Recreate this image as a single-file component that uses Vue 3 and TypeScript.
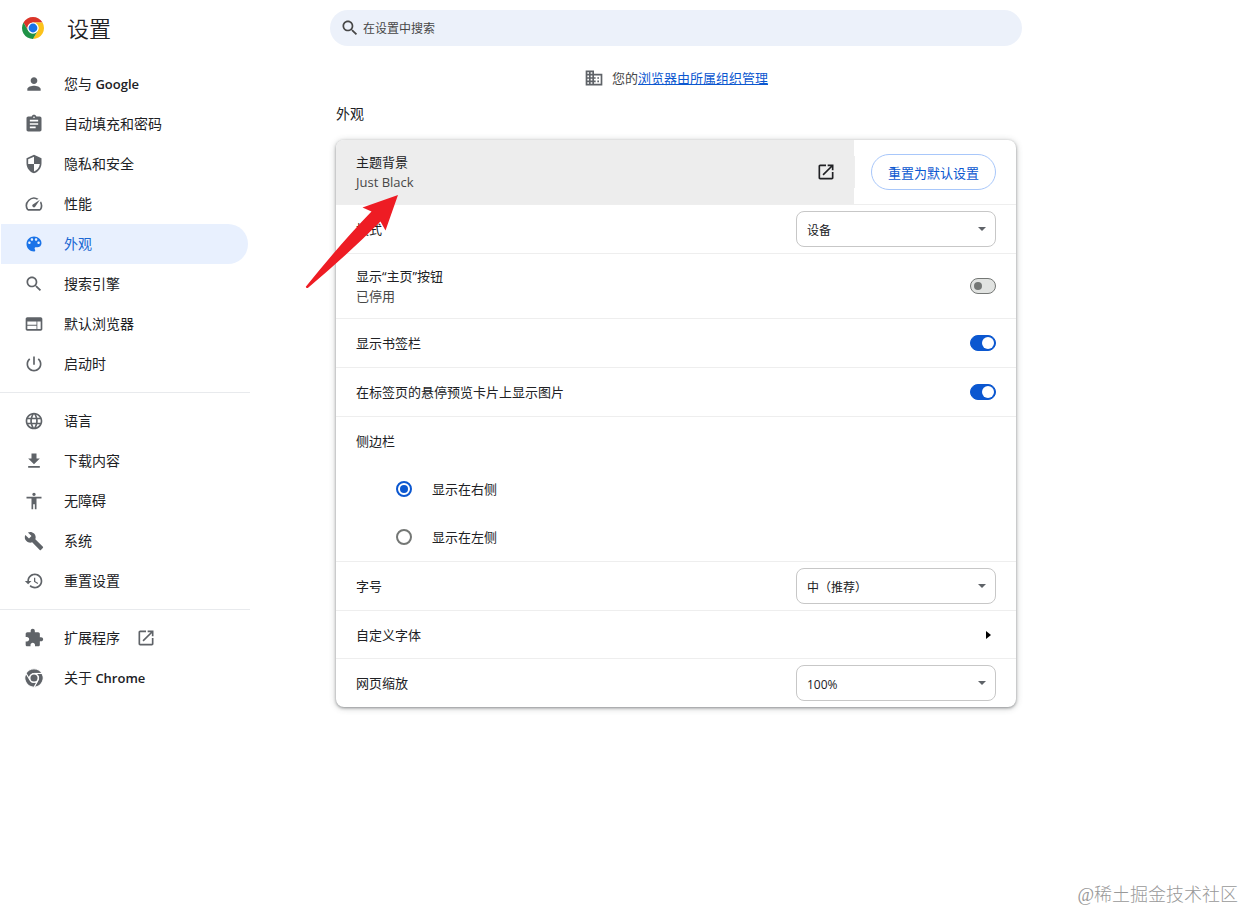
<script setup lang="ts">
import { ref } from 'vue'

interface MenuItem {
  label: string
  icon: string
  product?: string
  external?: boolean
}

const icons: Record<string, string> = {
  person: 'M12 12c2.21 0 4-1.79 4-4s-1.79-4-4-4-4 1.79-4 4 1.79 4 4 4zm0 2c-2.67 0-8 1.34-8 4v2h16v-2c0-2.66-5.33-4-8-4z',
  assignment: 'M19 3h-4.18C14.4 1.84 13.3 1 12 1c-1.3 0-2.4.84-2.82 2H5c-1.1 0-2 .9-2 2v14c0 1.1.9 2 2 2h14c1.1 0 2-.9 2-2V5c0-1.1-.9-2-2-2zm-7 0c.55 0 1 .45 1 1s-.45 1-1 1-1-.45-1-1 .45-1 1-1zm2 14H7v-2h7v2zm3-4H7v-2h10v2zm0-4H7V7h10v2z',
  security: 'M12 1L3 5v6c0 5.55 3.84 10.74 9 12 5.16-1.26 9-6.45 9-12V5l-9-4zm0 10.99h7c-.53 4.12-3.28 7.79-7 8.94V12H5V6.3l7-3.11v8.8z',
  speed: 'M20.38 8.57l-1.23 1.85a8 8 0 0 1-.22 7.58H5.07A8 8 0 0 1 15.58 6.85l1.85-1.23A10 10 0 0 0 3.35 19a2 2 0 0 0 1.72 1h13.85a2 2 0 0 0 1.74-1 10 10 0 0 0-.27-10.44zm-9.79 6.84a2 2 0 0 0 2.83 0l5.66-8.49-8.49 5.66a2 2 0 0 0 0 2.83z',
  palette: 'M12 3c-4.97 0-9 4.03-9 9s4.03 9 9 9c.83 0 1.5-.67 1.5-1.5 0-.39-.15-.74-.39-1.01-.23-.26-.38-.61-.38-.99 0-.83.67-1.5 1.5-1.5H16c2.76 0 5-2.24 5-5 0-4.42-4.03-8-9-8zm-5.5 9c-.83 0-1.5-.67-1.5-1.5S5.67 9 6.5 9 8 9.67 8 10.5 7.33 12 6.5 12zm3-4C8.67 8 8 7.33 8 6.5S8.67 5 9.5 5s1.5.67 1.5 1.5S10.33 8 9.5 8zm5 0c-.83 0-1.5-.67-1.5-1.5S13.67 5 14.5 5s1.5.67 1.5 1.5S15.33 8 14.5 8zm3 4c-.83 0-1.5-.67-1.5-1.5S16.67 9 17.5 9s1.5.67 1.5 1.5-.67 1.5-1.5 1.5z',
  search: 'M15.5 14h-.79l-.28-.27C15.41 12.59 16 11.11 16 9.5 16 5.91 13.09 3 9.5 3S3 5.91 3 9.5 5.91 16 9.5 16c1.61 0 3.09-.59 4.23-1.57l.27.28v.79l5 4.99L20.49 19l-4.99-5zm-6 0C7.01 14 5 11.99 5 9.5S7.01 5 9.5 5 14 7.01 14 9.5 11.99 14 9.5 14z',
  web: 'M20 4H4c-1.1 0-1.99.9-1.99 2L2 18c0 1.1.9 2 2 2h16c1.1 0 2-.9 2-2V6c0-1.1-.9-2-2-2zm-5 14H4v-4h11v4zm0-5H4V9h11v4zm5 5h-4V9h4v9z',
  power: 'M13 3h-2v10h2V3zm4.83 2.17l-1.42 1.42C17.99 7.86 19 9.81 19 12c0 3.87-3.13 7-7 7s-7-3.13-7-7c0-2.19 1.01-4.14 2.58-5.42L6.17 5.17C4.23 6.82 3 9.26 3 12c0 4.97 4.03 9 9 9s9-4.03 9-9c0-2.74-1.23-5.18-3.17-6.83z',
  language: 'M11.99 2C6.47 2 2 6.48 2 12s4.47 10 9.99 10C17.52 22 22 17.52 22 12S17.52 2 11.99 2zm6.93 6h-2.95c-.32-1.25-.78-2.45-1.38-3.56 1.84.63 3.37 1.91 4.33 3.56zM12 4.04c.83 1.2 1.48 2.53 1.91 3.96h-3.82c.43-1.43 1.08-2.76 1.91-3.96zM4.26 14C4.1 13.36 4 12.69 4 12s.1-1.36.26-2h3.38c-.08.66-.14 1.32-.14 2 0 .68.06 1.34.14 2H4.26zm.82 2h2.95c.32 1.25.78 2.45 1.38 3.56-1.84-.63-3.37-1.9-4.33-3.56zm2.95-8H5.08c.96-1.66 2.49-2.93 4.33-3.56C8.81 5.55 8.35 6.75 8.03 8zM12 19.96c-.83-1.2-1.48-2.53-1.91-3.96h3.82c-.43 1.43-1.08 2.76-1.91 3.96zM14.34 14H9.66c-.09-.66-.16-1.32-.16-2 0-.68.07-1.35.16-2h4.68c.09.65.16 1.32.16 2 0 .68-.07 1.34-.16 2zm.25 5.56c.6-1.11 1.06-2.31 1.38-3.56h2.95c-.96 1.65-2.49 2.93-4.33 3.56zM16.36 14c.08-.66.14-1.32.14-2 0-.68-.06-1.34-.14-2h3.38c.16.64.26 1.31.26 2s-.1 1.36-.26 2h-3.38z',
  download: 'M19 9h-4V3H9v6H5l7 7 7-7zM5 18v2h14v-2H5z',
  accessibility: 'M12 2c1.1 0 2 .9 2 2s-.9 2-2 2-2-.9-2-2 .9-2 2-2zm9 7h-6v13h-2v-6h-2v6H9V9H3V7h18v2z',
  build: 'M22.7 19l-9.1-9.1c.9-2.3.4-5-1.5-6.9-2-2-5-2.4-7.4-1.3L9 6 6 9 1.6 4.7C.4 7.1.9 10.1 2.9 12.1c1.9 1.9 4.6 2.4 6.9 1.5l9.1 9.1c.4.4 1 .4 1.4 0l2.3-2.3c.5-.4.5-1.1.1-1.4z',
  history: 'M13 3c-4.97 0-9 4.03-9 9H1l3.89 3.89.07.14L9 12H6c0-3.87 3.13-7 7-7s7 3.13 7 7-3.13 7-7 7c-1.93 0-3.68-.79-4.94-2.06l-1.42 1.42C8.27 19.99 10.51 21 13 21c4.97 0 9-4.03 9-9s-4.03-9-9-9zm-1 5v5l4.28 2.54.72-1.21-3.5-2.08V8H12z',
  extension: 'M20.5 11H19V7c0-1.1-.9-2-2-2h-4V3.5C13 2.12 11.88 1 10.5 1S8 2.12 8 3.5V5H4c-1.1 0-1.99.9-1.99 2v3.8H3.5c1.49 0 2.7 1.21 2.7 2.7s-1.21 2.7-2.7 2.7H2V20c0 1.1.9 2 2 2h3.8v-1.5c0-1.49 1.21-2.7 2.7-2.7 1.49 0 2.7 1.21 2.7 2.7V22H17c1.1 0 2-.9 2-2v-4h1.5c1.38 0 2.5-1.12 2.5-2.5S21.88 11 20.5 11z',
  openInNew: 'M19 19H5V5h7V3H5c-1.11 0-2 .9-2 2v14c0 1.1.89 2 2 2h14c1.1 0 2-.9 2-2v-7h-2v7zM14 3v2h3.59l-9.83 9.83 1.41 1.41L19 6.41V10h2V3h-7z',
  domain: 'M12 7V3H2v18h20V7H12zM6 19H4v-2h2v2zm0-4H4v-2h2v2zm0-4H4V9h2v2zm0-4H4V5h2v2zm4 12H8v-2h2v2zm0-4H8v-2h2v2zm0-4H8V9h2v2zm0-4H8V5h2v2zm10 12h-8v-2h2v-2h-2v-2h2v-2h-2V9h8v10zm-2-8h-2v2h2v-2zm0 4h-2v2h2v-2z',
}

const wedge = 'M24 13H43.05A22 22 0 0 0 4.95 13L14.47 29.5A11 11 0 0 1 24 13z'

const menuGroups: MenuItem[][] = [
  [
    { label: '您与', product: 'Google', icon: 'person' },
    { label: '自动填充和密码', icon: 'assignment' },
    { label: '隐私和安全', icon: 'security' },
    { label: '性能', icon: 'speed' },
    { label: '外观', icon: 'palette' },
    { label: '搜索引擎', icon: 'search' },
    { label: '默认浏览器', icon: 'web' },
    { label: '启动时', icon: 'power' },
  ],
  [
    { label: '语言', icon: 'language' },
    { label: '下载内容', icon: 'download' },
    { label: '无障碍', icon: 'accessibility' },
    { label: '系统', icon: 'build' },
    { label: '重置设置', icon: 'history' },
  ],
  [
    { label: '扩展程序', icon: 'extension', external: true },
    { label: '关于', product: 'Chrome', icon: 'chrome' },
  ],
]

const active = ref('外观')
const query = ref('')
const mode = ref('设备')
const showHome = ref(false)
const showBookmarks = ref(true)
const showPreview = ref(true)
const side = ref('right')
const fontSize = ref('中（推荐）')
const zoom = ref('100%')
</script>

<template>
  <div class="page">
    <aside class="left">
      <header class="brand">
        <svg class="logo" viewBox="0 0 48 48" aria-hidden="true">
          <path :d="wedge" fill="#db3529" />
          <path :d="wedge" fill="#fcc21b" transform="rotate(120 24 24)" />
          <path :d="wedge" fill="#1f9246" transform="rotate(240 24 24)" />
          <circle cx="24" cy="24" r="11" fill="#fff" />
          <circle cx="24" cy="24" r="8.8" fill="#1a73e8" />
        </svg>
        <h1>设置</h1>
      </header>
      <nav class="menu" aria-label="设置">
        <ul v-for="(group, g) in menuGroups" :key="g" class="group">
          <li v-for="item in group" :key="item.label">
            <a
              href="#"
              class="item"
              :class="{ active: item.label === active }"
              @click.prevent="active = item.label"
            >
              <svg v-if="item.icon === 'chrome'" class="icon" viewBox="0 0 48 48" aria-hidden="true">
                <g fill="currentColor" stroke="#fff" stroke-width="2.4">
                  <path :d="wedge" />
                  <path :d="wedge" transform="rotate(120 24 24)" />
                  <path :d="wedge" transform="rotate(240 24 24)" />
                  <circle cx="24" cy="24" r="10" stroke-width="3" />
                </g>
              </svg>
              <svg v-else class="icon" viewBox="0 0 24 24" aria-hidden="true">
                <path :d="icons[item.icon]" />
              </svg>
              <span>{{ item.label }}<b v-if="item.product">{{ ' ' + item.product }}</b></span>
              <svg v-if="item.external" class="icon" viewBox="0 0 24 24" aria-hidden="true">
                <path :d="icons.openInNew" />
              </svg>
            </a>
          </li>
        </ul>
      </nav>
    </aside>

    <main class="main">
      <label class="search">
        <svg class="icon" viewBox="0 0 24 24" aria-hidden="true"><path :d="icons.search" /></svg>
        <input v-model="query" type="text" placeholder="在设置中搜索" aria-label="在设置中搜索" />
      </label>

      <p class="managed">
        <svg class="icon" viewBox="0 0 24 24" aria-hidden="true"><path :d="icons.domain" /></svg>
        <span>您的<a href="#">浏览器由所属组织管理</a></span>
      </p>

      <h2>外观</h2>

      <section class="card">
        <div class="row theme">
          <a href="#" class="theme-link">
            <span class="text">
              <span>主题背景</span>
              <span class="sub">Just Black</span>
            </span>
            <svg class="icon" viewBox="0 0 24 24" aria-hidden="true"><path :d="icons.openInNew" /></svg>
          </a>
          <div class="reset-area">
            <button type="button" class="reset">重置为默认设置</button>
          </div>
        </div>

        <div class="row">
          <label for="mode">模式</label>
          <span class="select">
            <select id="mode" v-model="mode">
              <option>设备</option>
              <option>浅色</option>
              <option>深色</option>
            </select>
          </span>
        </div>

        <div class="row tall">
          <label for="home" class="text">
            <span>显示“主页”按钮</span>
            <span class="sub">已停用</span>
          </label>
          <input id="home" v-model="showHome" type="checkbox" role="switch" class="toggle" />
        </div>

        <div class="row">
          <label for="bookmarks">显示书签栏</label>
          <input id="bookmarks" v-model="showBookmarks" type="checkbox" role="switch" class="toggle" />
        </div>

        <div class="row">
          <label for="preview">在标签页的悬停预览卡片上显示图片</label>
          <input id="preview" v-model="showPreview" type="checkbox" role="switch" class="toggle" />
        </div>

        <fieldset class="side">
          <legend>侧边栏</legend>
          <label class="choice">
            <input v-model="side" type="radio" name="side" value="right" />
            <span>显示在右侧</span>
          </label>
          <label class="choice">
            <input v-model="side" type="radio" name="side" value="left" />
            <span>显示在左侧</span>
          </label>
        </fieldset>

        <div class="row">
          <label for="font-size">字号</label>
          <span class="select">
            <select id="font-size" v-model="fontSize">
              <option>小</option>
              <option>中（推荐）</option>
              <option>大</option>
            </select>
          </span>
        </div>

        <button type="button" class="row fonts">
          <span>自定义字体</span>
          <svg class="caret" viewBox="0 0 5 8" aria-hidden="true"><path d="M0 0l5 4-5 4z" /></svg>
        </button>

        <div class="row">
          <label for="zoom">网页缩放</label>
          <span class="select">
            <select id="zoom" v-model="zoom">
              <option>75%</option>
              <option>100%</option>
              <option>125%</option>
            </select>
          </span>
        </div>

        <svg class="arrow" viewBox="0 0 94 94" aria-hidden="true">
          <path d="M93 0L57.500 12.500L66.500 16.500Q36 48 .800 91.800Q1 93.500 2.800 93Q42 60 75.500 26.500L80.500 35.500z" />
        </svg>
      </section>
    </main>

    <div class="right">
      <span class="watermark">@稀土掘金技术社区</span>
    </div>
  </div>
</template>

<style>
body {
  margin: 0;
  background: #fff;
}
</style>

<style scoped>
.page {
  display: flex;
  min-height: 100vh;
  color: #202124;
  font-family: "Open Sans", "Noto Sans", "Noto Sans CJK SC", sans-serif;
  font-size: 13px;
  line-height: 20px;
}

.page *,
.page *::after {
  box-sizing: border-box;
}

.left {
  flex: 1 0 250px;
}

.main {
  flex: 0 1 692px;
  min-width: 0;
  padding-bottom: 40px;
}

.right {
  flex: 1 1 142px;
}

.icon {
  flex: none;
  width: 20px;
  height: 20px;
  fill: currentColor;
}

.brand {
  display: flex;
  align-items: center;
  gap: 22px;
  height: 56px;
  padding-left: 21px;
}

.logo {
  width: 24px;
  height: 24px;
}

h1 {
  margin: 0;
  font-size: 22px;
  font-weight: 350;
  line-height: 32px;
}

.menu {
  width: 250px;
  padding-top: 8px;
}

.group {
  margin: 0;
  padding: 0;
  list-style: none;
}

.group + .group {
  margin-top: 8px;
  padding-top: 8px;
  border-top: 1px solid #e8eaed;
}

.item {
  display: flex;
  align-items: center;
  gap: 20px;
  height: 40px;
  margin: 0 2px 0 1px;
  padding-left: 23px;
  border-radius: 0 20px 20px 0;
  color: #202124;
  font-size: 14px;
  text-decoration: none;
}

.item b {
  font-size: 13px;
  font-weight: 600;
}

.item .icon {
  color: #5f6368;
}

.item span + .icon {
  margin-left: -4px;
}

.item.active {
  background: #e8f0fe;
  color: #1967d2;
}

.item.active .icon {
  color: #1a73e8;
}

.search {
  display: flex;
  align-items: center;
  gap: 3px;
  height: 36px;
  margin-top: 10px;
  padding: 0 10px;
  border-radius: 18px;
  background: #ecf1fa;
  color: #474747;
}

.search input {
  flex: 1;
  min-width: 0;
  padding: 0;
  border: 0;
  outline: 0;
  background: none;
  color: inherit;
  font-family: inherit;
  font-size: 12px;
}

.search input::placeholder {
  color: #474747;
  opacity: 1;
}

.managed {
  display: flex;
  align-items: center;
  justify-content: center;
  gap: 8px;
  margin: 22px 0 0;
  color: #474747;
}

.managed .icon {
  color: #5f6368;
}

.managed a {
  color: #0b57d0;
}

h2 {
  margin: 16px 6px;
  font-size: 14px;
  font-weight: 400;
  line-height: 20px;
}

.card {
  position: relative;
  margin: 0 6px;
  border-radius: 8px;
  background: #fff;
  box-shadow: 0 1px 3px rgba(60, 64, 67, 0.5), 0 1px 6px 1px rgba(60, 64, 67, 0.2);
}

.row {
  display: flex;
  align-items: center;
  justify-content: space-between;
  min-height: 49px;
  padding: 0 20px;
  border-top: 1px solid #eeeeee;
}

.row.tall {
  min-height: 65px;
}

.row.theme {
  align-items: stretch;
  min-height: 64px;
  padding: 0;
  border-top: 0;
}

.theme-link {
  display: flex;
  flex: 1;
  align-items: center;
  justify-content: space-between;
  padding: 0 18px 0 20px;
  border-radius: 8px 0 0 0;
  background: #ededed;
  color: inherit;
  text-decoration: none;
}

.text {
  display: flex;
  flex-direction: column;
}

.sub {
  color: #474747;
}

.reset-area {
  display: flex;
  align-items: center;
  padding-right: 20px;
}

.reset-area::before {
  content: "";
  width: 1px;
  height: 32px;
  margin-right: 16px;
  background: #eeeeee;
}

.reset {
  height: 36px;
  padding: 0 16px;
  border: 1px solid #a8c7fa;
  border-radius: 18px;
  background: #fff;
  color: #0b57d0;
  font-family: inherit;
  font-size: 13px;
  font-weight: 400;
}

.select {
  position: relative;
  width: 200px;
}

.select::after {
  content: "";
  position: absolute;
  top: 16px;
  right: 10px;
  border: 4px solid transparent;
  border-top-color: #5f6368;
  border-bottom: 0;
  pointer-events: none;
}

select {
  appearance: none;
  display: block;
  width: 100%;
  height: 36px;
  padding: 2px 24px 0 10px;
  border: 1px solid #c7c7c7;
  border-radius: 8px;
  background: #fff;
  color: #202124;
  font-family: inherit;
  font-size: 12px;
}

.toggle {
  appearance: none;
  display: flex;
  align-items: center;
  width: 26px;
  height: 16px;
  margin: 0;
  padding: 0 3px;
  border: 1px solid #747775;
  border-radius: 8px;
  background: #e1e3e1;
}

.toggle::after {
  content: "";
  width: 8px;
  height: 8px;
  border-radius: 50%;
  background: #747775;
}

.toggle:checked {
  justify-content: flex-end;
  padding: 0 1px;
  border-color: #0b57d0;
  background: #0b57d0;
}

.toggle:checked::after {
  width: 12px;
  height: 12px;
  background: #fff;
}

.side {
  margin: 0;
  padding: 0 20px;
  border: 0;
  border-top: 1px solid #eeeeee;
}

.side legend {
  float: left;
  width: 100%;
  padding: 0;
  line-height: 48px;
}

.choice {
  display: flex;
  clear: both;
  align-items: center;
  gap: 20px;
  height: 48px;
  padding-left: 40px;
}

.choice input {
  appearance: none;
  display: grid;
  place-items: center;
  width: 16px;
  height: 16px;
  margin: 0;
  border: 2px solid #747775;
  border-radius: 50%;
}

.choice input:checked {
  border-color: #0b57d0;
}

.choice input:checked::after {
  content: "";
  width: 8px;
  height: 8px;
  border-radius: 50%;
  background: #0b57d0;
}

.fonts {
  width: 100%;
  min-height: 48px;
  border-width: 1px 0 0;
  background: none;
  color: inherit;
  font: inherit;
}

.caret {
  width: 5px;
  height: 8px;
  margin-right: 5px;
}

.arrow {
  position: absolute;
  top: 55px;
  left: -31px;
  width: 94px;
  height: 94px;
  fill: #ee1c24;
  pointer-events: none;
}

.watermark {
  position: absolute;
  right: 6px;
  bottom: 3px;
  color: #999999;
  font-family: "Liberation Serif", "Noto Sans CJK SC", serif;
  font-size: 18px;
  font-weight: 300;
  line-height: 26px;
}
</style>
